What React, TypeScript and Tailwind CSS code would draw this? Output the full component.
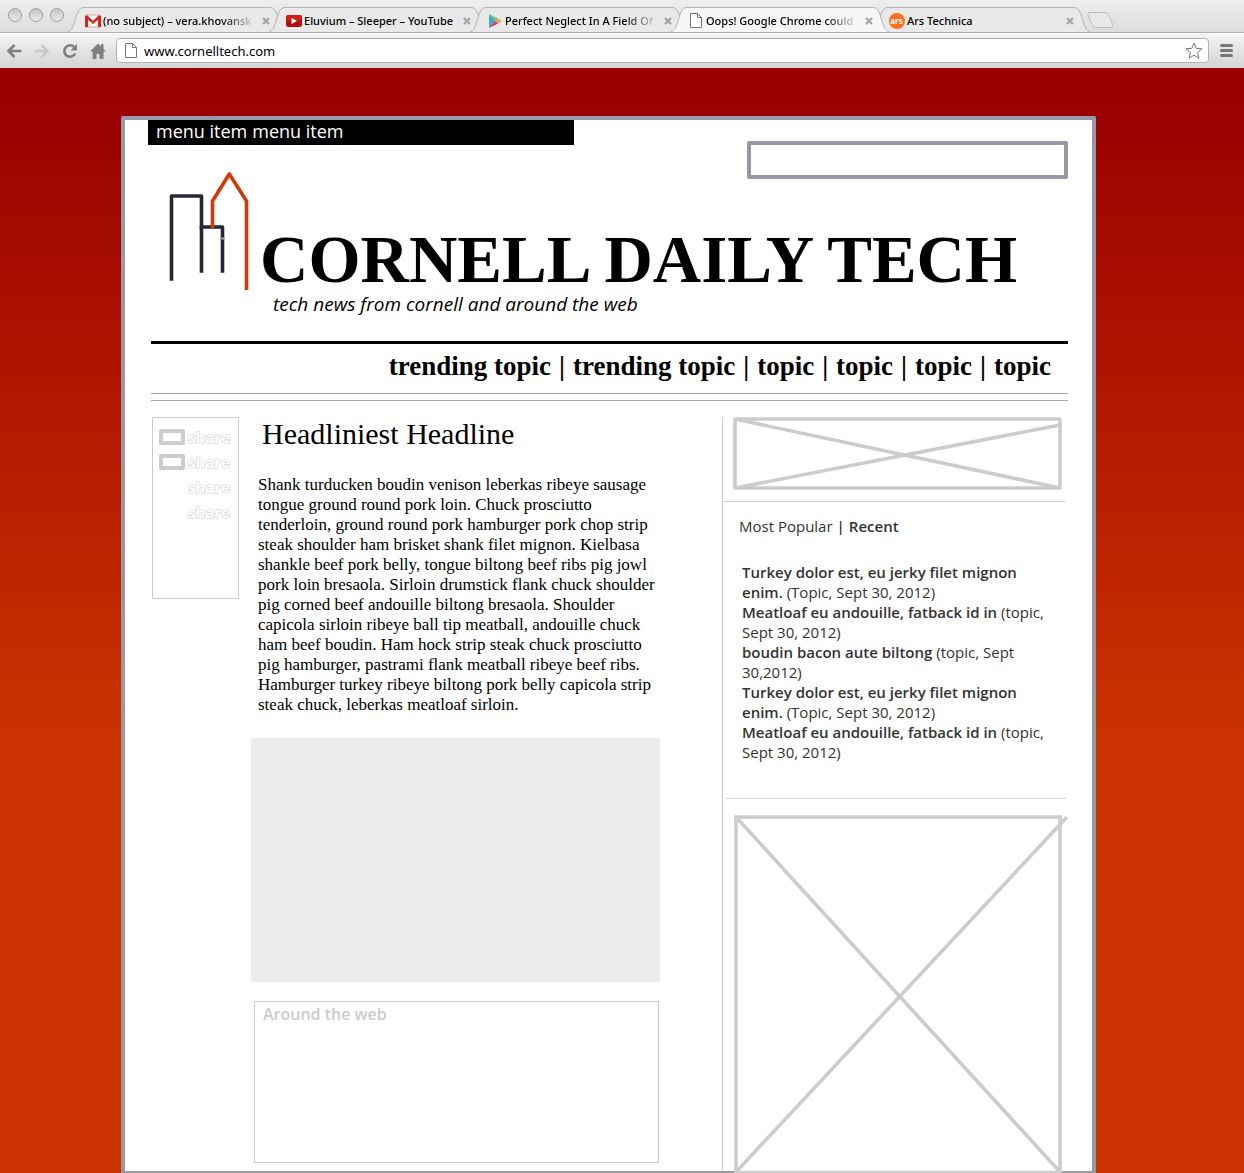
import type { ReactNode } from "react";

const tabFont = "font-['Noto_Sans','Open_Sans',sans-serif]";

function GmailIcon() {
  return (
    <svg viewBox="0 0 16 14" className="h-[14px] w-4 shrink-0" aria-hidden="true">
      <rect x="0.5" y="1" width="15" height="12" rx="1" fill="#fff" stroke="#d9a5a0" />
      <path d="M0 2h3v11H0zM13 2h3v11h-3z" fill="#d8251c" />
      <path d="M1 2l7 6.500 7-6.500" fill="none" stroke="#d8251c" strokeWidth="2.400" />
      <path d="M3 13l4-5M13 13L9 8" stroke="#e8c4c0" strokeWidth="0.800" />
    </svg>
  );
}

function YouTubeIcon() {
  return (
    <svg viewBox="0 0 16 12" className="h-3 w-4 shrink-0" aria-hidden="true">
      <rect width="16" height="12" rx="2.500" fill="#b80d10" />
      <rect width="16" height="6" rx="2.500" fill="#cf1c1c" />
      <path d="M5.500 3l5.500 3-5.500 3z" fill="#fff" />
    </svg>
  );
}

function PlayIcon() {
  return (
    <svg viewBox="0 0 16 16" className="size-4 shrink-0" aria-hidden="true">
      <path d="M2 1l6.500 7L2 15z" fill="#4ba6bd" />
      <path d="M2 1l9 4.500L8.500 8z" fill="#62c98e" />
      <path d="M2 15l9-4.500L8.500 8z" fill="#d5375c" />
      <path d="M11 5.500L15 8l-4 2.500L8.500 8z" fill="#efa14c" />
    </svg>
  );
}

function PageIcon() {
  return (
    <svg viewBox="0 0 12 15" className="h-[15px] w-3 shrink-0" aria-hidden="true">
      <path d="M0.500 0.500h7l4 4v10h-11z" fill="#fff" stroke="#777" />
      <path d="M7.500 0.500v4h4" fill="none" stroke="#777" />
    </svg>
  );
}

function ArsIcon() {
  return (
    <span
      className={`flex size-4 shrink-0 items-center justify-center rounded-full bg-[#ff6d1f] text-[8px] leading-none font-bold text-white ${tabFont}`}
    >
      ars
    </span>
  );
}

function CloseIcon() {
  return (
    <svg viewBox="0 0 8 8" className="size-2" aria-hidden="true">
      <path d="M1 1l6 6M7 1L1 7" stroke="#a3a3a3" strokeWidth="2.200" />
    </svg>
  );
}

function Tab({
  title,
  icon,
  active = false,
  faded = false,
}: {
  title: string;
  icon: ReactNode;
  active?: boolean;
  faded?: boolean;
}) {
  const fill = active ? "#f6f6f6" : "#e9e9e9";
  return (
    <div className={`-mr-[17px] flex h-[25px] max-w-[218px] min-w-0 flex-1 ${active ? "z-10 -mb-px" : ""}`}>
      <svg viewBox="0 0 16 25" className="h-[25px] w-4 shrink-0" aria-hidden="true">
        <path d="M0 24.500C4 24 5 20 7 14S10 0.500 16 0.500V25H0z" fill={fill} />
        <path d="M0 24.500C4 24 5 20 7 14S10 0.500 16 0.500" fill="none" stroke="#b4b4b4" />
      </svg>
      <div
        className={`flex min-w-0 flex-1 items-center border-t border-[#b4b4b4] pt-px ${
          active ? "bg-[#f6f6f6]" : "bg-[#e9e9e9]"
        }`}
      >
        <span className="flex w-[17px] shrink-0 justify-center">{icon}</span>
        <span
          className={`ml-[2px] min-w-0 flex-1 overflow-hidden text-[11px] leading-4 font-medium whitespace-nowrap text-black ${tabFont} ${
            faded ? "[mask-image:linear-gradient(to_right,black_78%,transparent)]" : ""
          }`}
        >
          {title}
        </span>
        <button type="button" aria-label={`Close ${title}`} className="ml-[6px] p-0">
          <CloseIcon />
        </button>
      </div>
      <svg viewBox="0 0 16 25" className="h-[25px] w-4 shrink-0" aria-hidden="true">
        <path d="M16 24.500C12 24 11 20 9 14S6 0.500 0 0.500V25H16z" fill={fill} />
        <path d="M16 24.500C12 24 11 20 9 14S6 0.500 0 0.500" fill="none" stroke="#b4b4b4" />
      </svg>
    </div>
  );
}

function BrowserChrome() {
  return (
    <div>
      <div className="flex h-[33px] items-end border-b border-[#b0b0b0] bg-linear-to-b from-[#eeeeee] to-[#dcdcdc]">
        <div className="mr-1 mb-[10px] ml-2 flex shrink-0 gap-[7px] self-end">
          {["Close window", "Minimize window", "Zoom window"].map((label) => (
            <button
              key={label}
              type="button"
              aria-label={label}
              className="size-[14px] rounded-full border border-[#9d9d9d] bg-linear-to-b from-[#c4c4c4] to-[#ececec]"
            />
          ))}
        </div>
        <div className="flex min-w-0 flex-1">
          <Tab title="(no subject) – vera.khovansk" icon={<GmailIcon />} faded />
          <Tab title="Eluvium – Sleeper – YouTube" icon={<YouTubeIcon />} />
          <Tab title="Perfect Neglect In A Field Of" icon={<PlayIcon />} faded />
          <Tab title="Oops! Google Chrome could" icon={<PageIcon />} active faded />
          <Tab title="Ars Technica" icon={<ArsIcon />} />
          <button type="button" aria-label="New tab" className="mt-[5px] ml-[14px] h-4 shrink-0">
            <svg viewBox="0 0 27 16" className="h-4 w-[27px]" aria-hidden="true">
              <path
                d="M3 0.500h15.500q2.500 0 3.500 2.500l3.500 9.500q1 3-2 3H9q-3 0-4-3L1 3.500q-1-3 2-3z"
                fill="#e8e8e8"
                stroke="#bdbdbd"
              />
            </svg>
          </button>
        </div>
      </div>
      <div className="flex h-[35px] items-center border-t border-white bg-linear-to-b from-[#f4f4f4] to-[#d4d4d4] pr-[11px] pb-px pl-[6px]">
        <div className="flex shrink-0 gap-3">
          <button type="button" aria-label="Back">
            <svg viewBox="0 0 16 16" className="size-4" fill="none" stroke="#808080" strokeWidth="2.600" aria-hidden="true">
              <path d="M15.500 8H2.500M8.500 2L2.500 8l6 6" />
            </svg>
          </button>
          <button type="button" aria-label="Forward">
            <svg viewBox="0 0 16 16" className="size-4" fill="none" stroke="#c9c9c9" strokeWidth="2.600" aria-hidden="true">
              <path d="M0.500 8h13M7.500 2l6 6-6 6" />
            </svg>
          </button>
          <button type="button" aria-label="Reload">
            <svg viewBox="0 0 16 16" className="size-4" aria-hidden="true">
              <path d="M12.300 4.200A5.700 5.700 0 1 0 13.200 10.500" fill="none" stroke="#808080" strokeWidth="2.600" />
              <path d="M15 1v6.500H8.500z" fill="#808080" />
            </svg>
          </button>
          <button type="button" aria-label="Home">
            <svg viewBox="0 0 16 16" className="size-4" fill="#808080" aria-hidden="true">
              <path d="M8 0.500l3 3V1h2.500v5L16 8.500h-2.500V16H9.500v-5h-3v5h-4V8.500H0z" />
            </svg>
          </button>
        </div>
        <div className="ml-[10px] flex h-[25px] min-w-0 flex-1 items-center rounded border border-[#b2b2b2] bg-white pr-[5px] pl-2">
          <PageIcon />
          <input
            aria-label="Address"
            defaultValue="www.cornelltech.com"
            className={`ml-[7px] min-w-0 flex-1 text-[13px] leading-5 text-black outline-none ${tabFont}`}
          />
          <button type="button" aria-label="Bookmark this page">
            <svg viewBox="0 0 18 18" className="size-[18px]" aria-hidden="true">
              <path
                d="M9 1l2.200 5.400 5.800.4-4.500 3.700 1.500 5.800L9 13.200l-5 3.100 1.500-5.800L1 6.800l5.800-.4z"
                fill="#fff"
                stroke="#777777"
                strokeLinejoin="round"
              />
            </svg>
          </button>
        </div>
        <button type="button" aria-label="Menu" className="ml-[11px] flex w-[13px] shrink-0 flex-col gap-[2px]">
          <span className="h-[3px] rounded-full bg-[#777777]" />
          <span className="h-[3px] rounded-full bg-[#777777]" />
          <span className="h-[3px] rounded-full bg-[#777777]" />
        </button>
      </div>
    </div>
  );
}

function Logo() {
  return (
    <svg viewBox="0 0 80 120" className="h-[120px] w-20 shrink-0" fill="none" strokeWidth="3.600" aria-hidden="true">
      <path d="M2.500 108V25H32.500V100" stroke="#26263a" strokeLinecap="square" strokeLinejoin="round" />
      <path d="M32.500 56H53.500V100" stroke="#26263a" strokeLinecap="square" strokeLinejoin="round" />
      <path d="M51.500 67.500h4" stroke="#8a8a98" strokeWidth="2.500" />
      <path d="M43.500 57V30L60.300 3 77.500 30V119" stroke="#d03a08" strokeLinejoin="round" />
    </svg>
  );
}

const topics = ["trending topic", "trending topic", "topic", "topic", "topic", "topic"];

const bodyLines = [
  "Shank turducken boudin venison leberkas ribeye sausage",
  "tongue ground round pork loin. Chuck prosciutto",
  "tenderloin, ground round pork hamburger pork chop strip",
  "steak shoulder ham brisket shank filet mignon. Kielbasa",
  "shankle beef pork belly, tongue biltong beef ribs pig jowl",
  "pork loin bresaola. Sirloin drumstick flank chuck shoulder",
  "pig corned beef andouille biltong bresaola. Shoulder",
  "capicola sirloin ribeye ball tip meatball, andouille chuck",
  "ham beef boudin. Ham hock strip steak chuck prosciutto",
  "pig hamburger, pastrami flank meatball ribeye beef ribs.",
  "Hamburger turkey ribeye biltong pork belly capicola strip",
  "steak chuck, leberkas meatloaf sirloin.",
];

const turkey = {
  title: (
    <>
      Turkey dolor est, eu jerky filet mignon
      <br />
      enim.
    </>
  ),
  meta: "(Topic, Sept 30, 2012)",
};
const meatloaf = {
  title: "Meatloaf eu andouille, fatback id in",
  meta: (
    <>
      (topic,
      <br />
      Sept 30, 2012)
    </>
  ),
};
const boudin = {
  title: "boudin bacon aute biltong",
  meta: (
    <>
      (topic, Sept
      <br />
      30,2012)
    </>
  ),
};
const popular = [turkey, meatloaf, boudin, turkey, meatloaf];

export default function App() {
  return (
    <div className="flex min-h-screen flex-col overflow-x-hidden">
      <BrowserChrome />
      <div className="flex-1 bg-[linear-gradient(to_bottom,#990000_30px,#cc3300_680px)] pt-12 pr-[148px] pl-[121px]">
        <div className="rounded-t-xs border-4 border-b-2 border-[#9a98a8] bg-white font-['Open_Sans','Noto_Sans',sans-serif]">
          <div className="flex items-start justify-between pr-6 pl-[23px]">
            <nav className="flex h-[25px] w-[426px] items-start gap-[5px] bg-black pl-2 text-[18px] leading-[22px] text-white">
              <a href="#one">menu item</a>
              <a href="#two">menu item</a>
            </nav>
            <input
              type="search"
              aria-label="Search"
              className="mt-[21px] h-[38px] w-[321px] rounded-xs border-4 border-[#9a98a8] bg-white px-2 outline-none"
            />
          </div>

          <header className="-mt-2 flex items-start pl-11">
            <Logo />
            <div className="pt-14 pl-[11px]">
              <h1 className="font-['Liberation_Serif',serif] text-[67px] leading-[65px] font-bold whitespace-nowrap text-black">
                CORNELL DAILY TECH
              </h1>
              <p className="pl-[13px] text-[19px] leading-6 text-black italic">tech news from cornell and around the web</p>
            </div>
          </header>

          <div className="mt-[25px] mr-6 ml-[26px]">
            <nav className="flex justify-end gap-2 border-t-[3px] border-black pt-1 pr-[17px] pb-[9px] font-['Liberation_Serif',serif] text-[27px] leading-9 font-bold text-black">
              {topics.map((topic, index) => (
                <span key={index} className="flex gap-2 whitespace-nowrap">
                  {index > 0 && <span>|</span>}
                  <a href="#topic">{topic}</a>
                </span>
              ))}
            </nav>
            <div className="h-2 border-y border-[#a9a8b6]" />

            <div className="grid grid-cols-[88px_1fr_346px] pt-4">
              <ul className="ml-px h-[182px] space-y-[5px] border border-[#cccccc] pt-[9px] pl-[6px]">
                {[true, true, false, false].map((boxed, index) => (
                  <li key={index} className="flex h-5 items-center gap-[3px]">
                    <span className={`h-4 w-[26px] rounded-xs ${boxed ? "border-4 border-[#cccccc]" : ""}`} />
                    <a
                      href="#share"
                      className="text-[15px] leading-5 font-bold text-white [-webkit-text-stroke:1px_#cccccc] [paint-order:stroke_fill]"
                    >
                      share
                    </a>
                  </li>
                ))}
              </ul>

              <main className="min-w-0 pr-[62px] pb-2 pl-3 font-['Liberation_Serif',serif] text-black">
                <h2 className="pl-[11px] text-[30px] leading-[34px]">Headliniest Headline</h2>
                <p className="mt-6 pl-[7px] text-[17px] leading-5 whitespace-nowrap">
                  {bodyLines.map((line) => (
                    <span key={line}>
                      {line}
                      <br />
                    </span>
                  ))}
                </p>
                <div className="mt-[23px] h-[244px] bg-[#ececec]" />
                <section className="mt-[19px] mr-px ml-[3px] h-[162px] border border-[#cccccc] pt-[2px] pl-2">
                  <h3 className="font-['Open_Sans',sans-serif] text-[16px] leading-5 font-semibold text-[#cccccc]">
                    Around the web
                  </h3>
                </section>
              </main>

              <aside className="border-l border-[#cccccc] text-[15px] leading-5 text-[#333333]">
                <div className="pr-[6px] pl-[10px]">
                  <svg
                    viewBox="0 0 329 73"
                    preserveAspectRatio="none"
                    className="h-[73px] w-full"
                    fill="none"
                    stroke="#cccccc"
                    strokeWidth="3.600"
                    strokeLinejoin="round"
                    aria-hidden="true"
                  >
                    <path d="M2 2H327V71H2zM2 2L327 71M2 71L327 8" />
                  </svg>
                </div>
                <hr className="mt-[11px] mr-[2px] border-[#d4d4d4]" />
                <div className="mt-[14px] flex gap-1 pl-4">
                  <button type="button">Most Popular</button>
                  <span className="font-semibold">|</span>
                  <button type="button" className="font-semibold">
                    Recent
                  </button>
                </div>
                <ul className="mt-[26px] pl-[19px] whitespace-nowrap">
                  {popular.map((item, index) => (
                    <li key={index}>
                      <a href="#story" className="font-semibold">
                        {item.title}
                      </a>{" "}
                      {item.meta}
                    </li>
                  ))}
                </ul>
                <hr className="mt-9 mr-[2px] ml-[3px] border-[#d4d4d4]" />
                <div className="-mb-[2px] pt-4 pr-[6px] pl-[11px]">
                  <svg
                    viewBox="0 0 328 358"
                    preserveAspectRatio="none"
                    className="h-[358px] w-full overflow-visible"
                    fill="none"
                    stroke="#cccccc"
                    strokeWidth="3.600"
                    aria-hidden="true"
                  >
                    <path d="M0 2H328M2 2V358M326 2V358M0 357.500H328M2 2L326 357M2 357L333 2" />
                  </svg>
                </div>
              </aside>
            </div>
          </div>
        </div>
      </div>
    </div>
  );
}
